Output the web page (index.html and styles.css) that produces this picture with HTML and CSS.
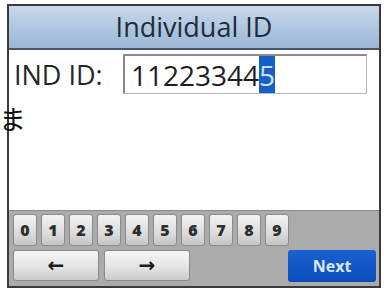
FILE: index.html
```html
<!DOCTYPE html>
<html>
<head>
<meta charset="utf-8">
<link rel="stylesheet" href="styles.css">
</head>
<body>
<div class="screen">
  <div class="title">Individual ID</div>
  <div class="content">
    <div class="row">
      <span class="label">IND ID:</span>
      <div class="input"><span class="digits">11223344</span><span class="cursor">5</span></div>
    </div>
  </div>
  <div class="keypad">
    <div class="numrow">
      <div class="key">0</div><div class="key">1</div><div class="key">2</div><div class="key">3</div><div class="key">4</div><div class="key">5</div><div class="key">6</div><div class="key">7</div><div class="key">8</div><div class="key">9</div>
    </div>
    <div class="navrow">
      <div class="navkey">&larr;</div>
      <div class="navkey">&rarr;</div>
      <div class="spacer"></div>
      <div class="next">Next</div>
    </div>
  </div>
</div>
<span class="stray">ま</span>
</body>
</html>
```
FILE: styles.css
```css
html, body {
  margin: 0;
  padding: 0;
  background: #ffffff;
}
body {
  width: 384px;
  height: 290px;
  position: relative;
  overflow: hidden;
  font-family: "Open Sans", "Noto Sans", sans-serif;
}
.screen {
  margin: 4px 0 0 7px;
  width: 374px;
  height: 284px;
  box-sizing: border-box;
  border: 2px solid #3a3a3a;
  display: flex;
  flex-direction: column;
  background: #fff;
}
.title {
  height: 42px;
  flex: none;
  background: linear-gradient(#c9d8ec, #a7c0dd 70%, #9cb6d6);
  border-bottom: 2px solid #4a5563;
  text-align: center;
  font-size: 27px;
  font-weight: 500;
  line-height: 42px;
  color: #1f2c3a;
}
.content {
  flex: 1;
  background: #fff;
}
.row {
  display: flex;
  align-items: center;
  padding: 4px 0 0 5px;
}
.label {
  font-size: 27px;
  font-weight: 500;
  color: #262626;
  width: 109px;
}
.input {
  width: 244px;
  height: 40px;
  box-sizing: border-box;
  border: 1px solid #b8b8b8;
  border-top: 2px solid #8a8a8a;
  border-left: 2px solid #8a8a8a;
  display: flex;
  align-items: stretch;
  padding-left: 6px;
  font-size: 28px;
  font-weight: 500;
  color: #1e1e1e;
  line-height: 38px;
}
.cursor {
  background: #1560c8;
  color: #cfe0f7;
}
.keypad {
  height: 76px;
  flex: none;
  background: #ababab;
  border-top: 1px solid #8c8c8c;
  display: flex;
  flex-direction: column;
  gap: 4px;
  padding: 3px 0 0 4px;
  box-sizing: border-box;
}
.numrow {
  display: flex;
  gap: 4px;
}
.key {
  width: 24px;
  height: 32px;
  box-sizing: border-box;
  border: 1px solid #8a8a8a;
  border-radius: 3px;
  background: linear-gradient(#f4f4f4, #dcdcdc 60%, #c4c4c4);
  font-weight: 800;
  font-size: 16px;
  color: #2e2e2e;
  text-align: center;
  line-height: 30px;
}
.navrow {
  display: flex;
  gap: 5px;
  padding-right: 3px;
}
.navkey {
  width: 86px;
  height: 31px;
  box-sizing: border-box;
  border: 1px solid #8a8a8a;
  border-radius: 3px;
  background: linear-gradient(#f6f6f6, #e2e2e2 60%, #cacaca);
  font-family: "DejaVu Sans", sans-serif;
  font-size: 20px;
  font-weight: bold;
  color: #1a1a1a;
  text-align: center;
  line-height: 28px;
}
.spacer {
  flex: 1;
}
.next {
  width: 88px;
  height: 32px;
  box-sizing: border-box;
  border-radius: 3px;
  background: linear-gradient(#1a62d0, #0a4cbc);
  color: #d8e6fa;
  font-weight: bold;
  font-size: 16px;
  text-align: center;
  line-height: 32px;
}
.stray {
  position: absolute;
  left: -1px;
  top: 105px;
  font-family: "Noto Sans CJK JP", sans-serif;
  font-size: 27px;
  color: #111;
  line-height: 1;
}
```
